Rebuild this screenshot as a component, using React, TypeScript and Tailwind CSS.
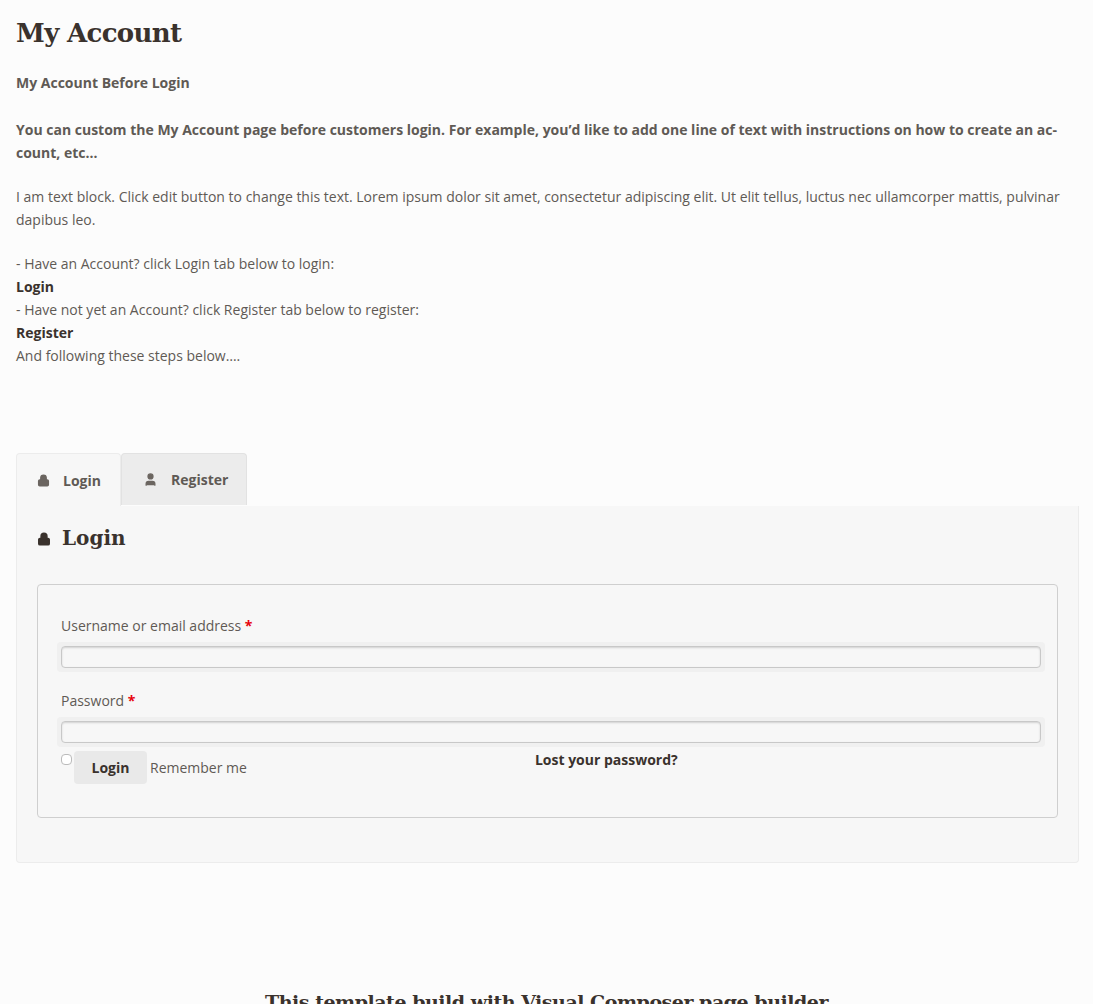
import { Lock, User } from 'lucide-react';

const slab = { fontFamily: '"DejaVu Serif", serif' };

export default function App() {
    return (
        <div className="min-h-[1004px] bg-[#fcfcfc] text-[#5f5a55] text-[14px] leading-[23px] px-4" style={{ fontFamily: '"Open Sans", sans-serif' }}>
            <h1 className="text-[26px] font-bold text-[#3a322d] pt-[14px] leading-[38px] tracking-tight" style={slab}>My Account</h1>
            <p className="font-bold mt-[19px]">My Account Before Login</p>
            <p className="font-bold mt-[24px]">You can custom the My Account page before customers login. For example, you’d like to add one line of text with instructions on how to create an ac-count, etc…</p>
            <p className="mt-[21px]">I am text block. Click edit button to change this text. Lorem ipsum dolor sit amet, consectetur adipiscing elit. Ut elit tellus, luctus nec ullamcorper mattis, pulvinar dapibus leo.</p>
            <div className="mt-[21px]">
                <div>- Have an Account? click Login tab below to login:</div>
                <div className="font-bold text-[#3a322d]">Login</div>
                <div>- Have not yet an Account? click Register tab below to register:</div>
                <div className="font-bold text-[#3a322d]">Register</div>
                <div>And following these steps below….</div>
            </div>

            {/* Tabs */}
            <div className="mt-[86px] flex">
                <div className="w-[105px] h-[53px] flex items-center gap-[13px] pl-[20px] bg-[#f7f7f7] border border-b-0 border-[#ececec] rounded-t font-bold">
                    <Lock size={13} fill="#6b6560" strokeWidth={2.5} className="text-[#6b6560]" /> Login
                </div>
                <div className="w-[126px] h-[52px] flex items-center gap-[13px] pl-[21px] bg-[#ececec] border border-[#e2e2e2] border-b-0 rounded-t font-bold">
                    <User size={15} fill="#6b6560" className="text-[#6b6560]" /> Register
                </div>
            </div>
            <div className="w-[1063px] bg-[#f7f7f7] border border-[#ececec] border-t-0 rounded-b px-[20px] pt-[21px] pb-[44px]">
                <h2 className="flex items-center gap-[11px] text-[20px] font-bold text-[#3a322d]" style={slab}>
                    <Lock size={14} fill="#3a322d" strokeWidth={2.5} /> Login
                </h2>
                <div className="mt-[34px] border border-[#cfcfcf] rounded px-[23px] pt-[29px] pb-[33px]">
                    <label className="block">Username or email address <span className="text-red-600 font-bold">*</span></label>
                    <div className="mt-[5px] p-[4px] -ml-[4px] bg-[#f0f0f0] rounded w-[988px]">
                        <div className="h-[22px] border border-[#c8c8c8] bg-[#f7f7f7] rounded-sm" style={{ boxShadow: 'inset 0 1px 2px rgba(0,0,0,0.15)' }} />
                    </div>
                    <label className="block mt-[17px]">Password <span className="text-red-600 font-bold">*</span></label>
                    <div className="mt-[5px] p-[4px] -ml-[4px] bg-[#f0f0f0] rounded w-[988px]">
                        <div className="h-[22px] border border-[#c8c8c8] bg-[#f7f7f7] rounded-sm" style={{ boxShadow: 'inset 0 1px 2px rgba(0,0,0,0.15)' }} />
                    </div>
                    <div className="flex items-start mt-[4px]">
                        <span className="w-[11px] h-[11px] mt-[3px] border border-[#bbb] bg-white rounded-sm" />
                        <span className="w-[73px] h-[33px] ml-[2px] flex items-center justify-center bg-[#e9e9e9] rounded-sm font-bold text-[#3a322d]">Login</span>
                        <span className="ml-[3px] mt-[5px]">Remember me</span>
                        <span className="ml-[288px] font-bold text-[#3a322d] -mt-[3px]">Lost your password?</span>
                    </div>
                </div>
            </div>

            <p className="text-center text-[19px] font-bold text-[#3a322d] mt-[128px] tracking-tight" style={slab}>This template build with Visual Composer page builder</p>
        </div>
    );
}
